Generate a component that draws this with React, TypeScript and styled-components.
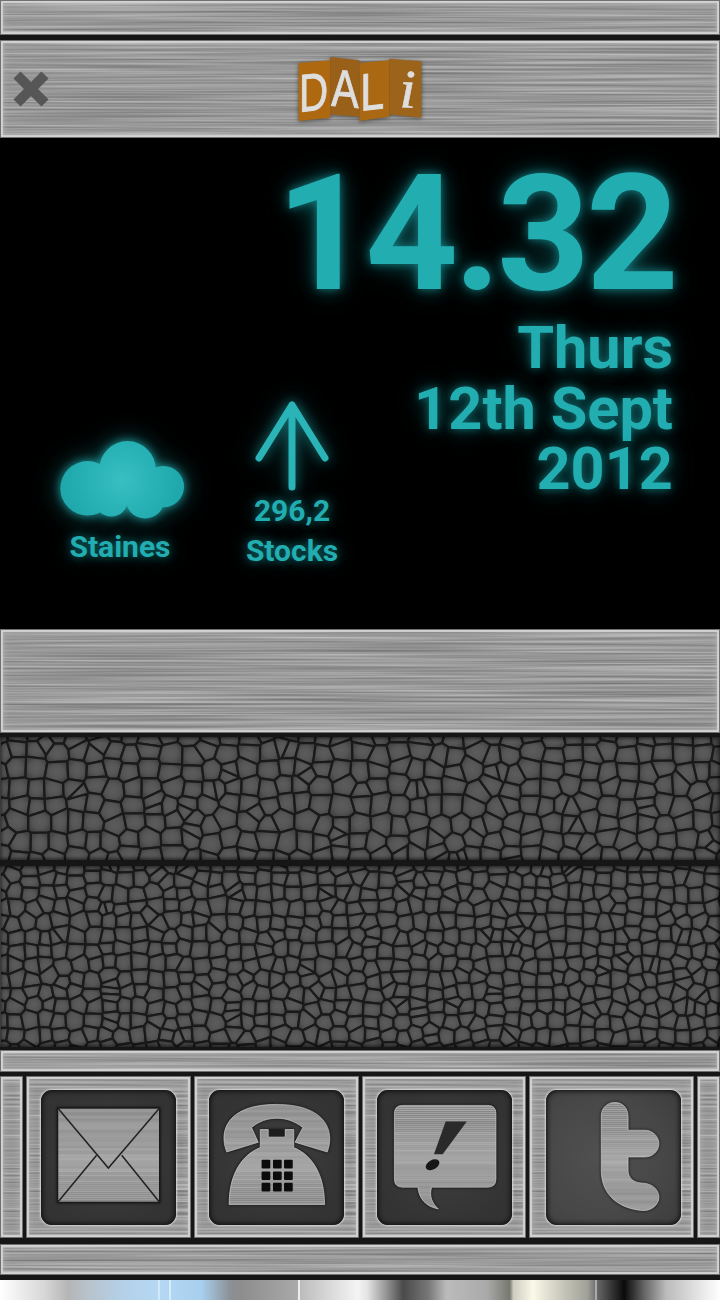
import React from "react";
import styled, { createGlobalStyle } from "styled-components";

const Global = createGlobalStyle`
  html, body { margin: 0; padding: 0; background: #000; }
  #root { width: 720px; height: 1300px; overflow: hidden; }
`;

const brushedSvg = `<svg xmlns='http://www.w3.org/2000/svg' width='720' height='240'><filter id='n' x='0' y='0' width='100%' height='100%' color-interpolation-filters='sRGB'><feTurbulence type='fractalNoise' baseFrequency='0.004 0.45' numOctaves='2' seed='7'/><feColorMatrix values='.4 0 0 0 .4 .4 0 0 0 .4 .4 0 0 0 .4 0 0 0 0 1'/><feGaussianBlur stdDeviation='5 .4'/></filter><rect width='720' height='240' filter='url(#n)'/></svg>`;
const brushed = `url("data:image/svg+xml,${encodeURIComponent(brushedSvg)}")`;

const bevel = `
  inset 0 0 0 1px #707070,
  inset 0 0 1px 3px #d2d2d2,
  inset 0 0 7px 4px rgba(255,255,255,.16)
`;

const Page = styled.div`
  width: 720px;
  height: 1300px;
  background: #161616;
  display: flex;
  flex-direction: column;
  font-family: Roboto, "Liberation Sans", sans-serif;
`;

const MetalBar = styled.div<{ $h: number; $gap?: number; $shift?: number }>`
  height: ${(p) => p.$h}px;
  flex: none;
  margin-top: ${(p) => p.$gap ?? 0}px;
  background: #999 ${brushed} 0 ${(p) => p.$shift ?? 0}px;
  box-shadow: ${bevel};
`;

const Header = styled(MetalBar)`
  display: grid;
  grid-template-columns: 1fr auto 1fr;
  align-items: center;
  padding: 0 13px;
`;

const Close = styled.svg`
  width: 36px;
  height: 36px;
  display: block;
`;

const Logo = styled.svg`
  width: 134px;
  height: 73px;
  display: block;
  filter: drop-shadow(0 1px 2px rgba(40, 40, 40, 0.7));
`;

const glow = `0 0 9px rgba(32,190,195,.5), 0 0 20px rgba(32,190,195,.35), 0 0 32px rgba(32,190,195,.2)`;

const Screen = styled.section`
  height: 491px;
  flex: none;
  background: #000;
  color: #22adb1;
  font-weight: 700;
  box-sizing: border-box;
  padding: 0 42px 0 0;
  text-shadow: ${glow};
`;

const Time = styled.div`
  font-size: 162px;
  line-height: 162px;
  letter-spacing: -4px;
  text-align: right;
  margin: 15px 3px 0 0;
`;

const Lower = styled.div`
  display: flex;
  justify-content: space-between;
  margin-top: 3px;
`;

const Widgets = styled.div`
  display: flex;
  align-items: flex-start;
  padding-left: 60px;
`;

const Weather = styled.div`
  width: 124px;
  margin-top: 123px;
  display: flex;
  flex-direction: column;
  align-items: center;
`;

const Stock = styled.div`
  width: 110px;
  margin: 83px 0 0 53px;
  display: flex;
  flex-direction: column;
  align-items: center;
`;

const Small = styled.div`
  font-size: 30px;
  line-height: 40px;
  white-space: nowrap;
`;

const Place = styled(Small)`
  margin: 8px 4px 0 0;
`;

const Cloud = styled.svg`
  width: 124px;
  height: 78px;
  display: block;
  overflow: visible;
  filter: drop-shadow(0 0 5px rgba(40, 205, 210, 0.7)) drop-shadow(0 0 12px rgba(32, 190, 195, 0.4));
`;

const Arrow = styled.svg`
  width: 76px;
  height: 90px;
  display: block;
  overflow: visible;
  filter: drop-shadow(0 0 6px rgba(32, 190, 195, 0.55)) drop-shadow(0 0 12px rgba(32, 190, 195, 0.3));
`;

const DateBlock = styled.div`
  font-size: 59.5px;
  line-height: 60.5px;
  text-align: right;
  white-space: nowrap;
  margin-right: 5px;
`;

const LeatherWrap = styled.div<{ $h: number; $gap: number }>`
  height: ${(p) => p.$h}px;
  margin-top: ${(p) => p.$gap}px;
  flex: none;
  position: relative;
  overflow: hidden;
  background: #262626;
  &::after {
    content: "";
    position: absolute;
    inset: 0;
    box-shadow: inset 0 0 4px 1px rgba(0, 0, 0, 0.75), inset 1px 0 0 #666;
  }
`;

const LeatherSvg = styled.svg`
  display: block;
  filter: blur(0.7px);
`;

const TileRow = styled.div`
  height: 162px;
  flex: none;
  margin-top: 4px;
  display: grid;
  grid-template-columns: 23px 165px 165px 164px 165px 1fr;
  column-gap: 3px;
`;

const Tile = styled.div<{ $shift: number }>`
  background: #999 ${brushed} 0 ${(p) => p.$shift}px;
  box-shadow: ${bevel};
  display: flex;
  align-items: center;
  justify-content: center;
`;

const IconBox = styled.div<{ $light?: boolean }>`
  width: 135px;
  height: 135px;
  border-radius: 11px;
  margin-left: ${(p) => (p.$light ? 4 : 0)}px;
  background: ${(p) =>
    p.$light
      ? "radial-gradient(circle at 40% 50%, #505050, #474747 60%, #3c3c3c)"
      : "radial-gradient(circle at 50% 50%, #3f3f3f, #333 75%)"};
  box-shadow: 0 0 2px 1px rgba(235, 235, 235, 0.75), inset 0 0 5px 1px #0c0c0c;
`;

const IconSvg = styled.svg`
  width: 135px;
  height: 135px;
  display: block;
  filter: drop-shadow(0 0 1.5px rgba(0, 0, 0, 0.95));
`;

const Strip = styled.div`
  height: 20px;
  flex: none;
  margin-top: 5px;
  background:
    linear-gradient(to right,
      transparent 22%, #cfe8fa 22%, #cfe8fa 22.2%, transparent 22.2%,
      transparent 23.5%, #d4ecfb 23.5%, #d4ecfb 23.7%, transparent 23.7%,
      transparent 41.4%, #eee 41.4%, #eee 41.6%, transparent 41.6%,
      transparent 82.7%, #aaa 82.7%, #aaa 82.85%, transparent 82.85%),
    linear-gradient(to right,
      #fff 0%, #d8d8d8 6%, #b5b5b5 9.5%, #b8c2ca 12%, #b4d0e8 17%, #b5d8f3 22%,
      #a8cfee 28%, #8b9094 32%, #8d8d8d 33.5%, #a9a9a9 41.3%, #bdbdbd 41.8%,
      #f4f4f4 49.7%, #e4e4e4 51%, #8a8a8a 54%, #4a4a4a 56%, #777 59.5%, #bbb 62%,
      #aaa 67.6%, #77786f 70.8%, #ccccc0 71.3%, #fbf9e8 74%, #c8c8bc 78%, #a0a098 81.6%,
      #666 83%, #0a0a0a 86.7%, #666 89.5%, #bbb 92.5%, #fff 100%);
`;

// Seeded cell texture
function rng(seed: number) {
  let s = seed;
  return () => {
    s = (s * 1664525 + 1013904223) >>> 0;
    return s / 4294967296;
  };
}

type P = [number, number];

function clip(poly: P[], a: P, b: P): P[] {
  const mx = (a[0] + b[0]) / 2;
  const my = (a[1] + b[1]) / 2;
  const nx = b[0] - a[0];
  const ny = b[1] - a[1];
  const side = (p: P) => (p[0] - mx) * nx + (p[1] - my) * ny;
  const out: P[] = [];
  for (let i = 0; i < poly.length; i++) {
    const c = poly[i];
    const d = poly[(i + 1) % poly.length];
    const sc = side(c);
    const sd = side(d);
    if (sc <= 0) out.push(c);
    if (sc < 0 !== sd < 0) {
      const t = sc / (sc - sd);
      out.push([c[0] + (d[0] - c[0]) * t, c[1] + (d[1] - c[1]) * t]);
    }
  }
  return out;
}

function cells(w: number, h: number, step: number, seed: number): string[] {
  const r = rng(seed);
  const pts: P[] = [];
  for (let y = -step; y < h + step; y += step * 0.92) {
    for (let x = -step; x < w + step; x += step) {
      pts.push([x + (r() - 0.5) * step * 0.55, y + (r() - 0.5) * step * 0.55]);
      if (r() < 0.07) pts.push([x + (r() - 0.5) * step, y + (r() - 0.5) * step]);
    }
  }
  const res: string[] = [];
  for (const p of pts) {
    let poly: P[] = [
      [p[0] - 40, p[1] - 40],
      [p[0] + 40, p[1] - 40],
      [p[0] + 40, p[1] + 40],
      [p[0] - 40, p[1] + 40],
    ];
    for (const q of pts) {
      if (q === p) continue;
      if (Math.abs(q[0] - p[0]) > 45 || Math.abs(q[1] - p[1]) > 45) continue;
      poly = clip(poly, p, q);
      if (poly.length === 0) break;
    }
    if (poly.length) res.push(poly.map((v) => `${v[0].toFixed(1)},${v[1].toFixed(1)}`).join(" "));
  }
  return res;
}

function Leather({ h, gap, step, seed, id }: { h: number; gap: number; step: number; seed: number; id: string }) {
  const polys = React.useMemo(() => cells(720, h, step, seed), [h, step, seed]);
  return (
    <LeatherWrap $h={h} $gap={gap}>
      <LeatherSvg width={720} height={h} viewBox={`0 0 720 ${h}`}>
        <defs>
          <radialGradient id={id}>
            <stop offset="0%" stopColor="#5c5c5c" />
            <stop offset="60%" stopColor="#555" />
            <stop offset="100%" stopColor="#444" />
          </radialGradient>
        </defs>
        {polys.map((pt, i) => (
          <polygon key={i} points={pt} fill={`url(#${id})`} stroke="#1a1a1a" strokeWidth={2.2} strokeLinejoin="round" />
        ))}
      </LeatherSvg>
    </LeatherWrap>
  );
}

const edge = "#d0d0d0";

function MetalPattern({ id, seed }: { id: string; seed: number }) {
  const r = rng(seed);
  const rows = Array.from({ length: 60 }, (_, i) => {
    const v = Math.round(158 + r() * 20);
    return <rect key={i} x="0" y={i * 6} width="1200" height="6" fill={`rgb(${v},${v},${v})`} />;
  });
  return (
    <pattern id={id} patternUnits="userSpaceOnUse" width="1200" height="360">
      {rows}
    </pattern>
  );
}

function MailIcon() {
  return (
    <IconSvg viewBox="124 150 403 403">
      <defs>
        <MetalPattern id="m1" seed={11} />
      </defs>
      <rect x="174" y="204" width="304" height="281" fill="url(#m1)" stroke="#111" strokeWidth="3" />
      <g fill="none" stroke="#222" strokeWidth="4.5">
        <path d="M174 204 L325 383 L478 204" />
        <path d="M174 485 L290 345" />
        <path d="M478 485 L365 345" />
      </g>
    </IconSvg>
  );
}

function PhoneIcon() {
  return (
    <IconSvg viewBox="625 150 403 403">
      <defs>
        <MetalPattern id="m2" seed={23} />
      </defs>
      <path
        d="M678 335 C652 270 682 193 825 193 C972 193 1002 270 978 335 L882 306 L905 262 C860 225 795 225 752 262 L772 306 Z"
        fill="url(#m2)"
        stroke={edge}
        strokeWidth="2"
      />
      <path
        d="M685 492 C685 405 720 345 778 322 L778 268 L802 268 L802 290 L852 290 L852 268 L878 268 L878 322 C935 345 970 405 970 492 Z"
        fill="url(#m2)"
        stroke={edge}
        strokeWidth="2"
      />
      <path d="M804 268 L850 268 L850 288 L804 288 Z" fill="#1d1d1d" />
      <g fill="#0c0c0c">
        {[782, 816, 849].flatMap((x) =>
          [358, 393, 427].map((y) => <rect key={`${x}-${y}`} x={x} y={y} width="26" height="26" rx="3" />)
        )}
      </g>
    </IconSvg>
  );
}

function ChatIcon() {
  return (
    <IconSvg viewBox="50 152 403 403">
      <defs>
        <MetalPattern id="m3" seed={37} />
      </defs>
      <path
        d="M126 198 L381 198 Q405 198 405 222 L405 418 Q405 442 381 442 L213 442 C205 470 215 490 233 507 C195 500 175 475 172 442 L126 442 Q102 442 102 418 L102 222 Q102 198 126 198 Z"
        fill="url(#m3)"
        stroke={edge}
        strokeWidth="2"
      />
      <path d="M255 246 L318 246 L246 344 L220 344 Z" fill="#2a2a2a" />
      <ellipse cx="216" cy="375" rx="22" ry="14" transform="rotate(-30 216 375)" fill="#161616" />
    </IconSvg>
  );
}

function BirdIcon() {
  return (
    <IconSvg viewBox="560 155 403 403">
      <defs>
        <MetalPattern id="m4" seed={51} />
      </defs>
      <path
        d="M725 232 C725 207 745 192 765 192 C790 192 805 210 805 235 L805 275 L855 275 C880 275 897 295 897 315 C897 338 878 355 855 355 L805 355 L805 395 C805 420 825 433 850 433 C880 435 897 455 897 475 C897 498 875 515 850 515 C780 510 725 470 725 395 Z"
        fill="url(#m4)"
        stroke={edge}
        strokeWidth="2"
      />
    </IconSvg>
  );
}

const serif = '"Liberation Serif", serif';
const sans = '"Liberation Sans", sans-serif';

export default function App() {
  return (
    <Page>
      <Global />
      <MetalBar $h={35} />
      <Header $h={98} $gap={5} $shift={-40}>
        <Close viewBox="0 0 36 36">
          <path d="M4 4 L32 32 M32 4 L4 32" stroke="#565656" strokeWidth="10" />
        </Close>
        <Logo viewBox="40 20 400 220">
          <polygon points="55,50 150,42 150,215 55,225" fill="#ad6810" />
          <polygon points="150,32 238,42 238,212 150,205" fill="#99601a" />
          <polygon points="238,50 328,42 328,212 238,225" fill="#aa6812" />
          <polygon points="328,37 425,45 425,215 328,205" fill="#9c631a" />
          <g fill="#dedede" stroke="#dedede">
            <text transform="matrix(.76 -.08 0 1 56 198)" fontFamily={sans} fontSize="160" strokeWidth="3">D</text>
            <text transform="matrix(.78 .07 0 1 153 178)" fontFamily={sans} fontSize="158" strokeWidth="3">A</text>
            <text transform="matrix(.82 -.1 0 1 241 195)" fontFamily={sans} fontSize="158" strokeWidth="3">L</text>
            <text transform="matrix(1.1 .03 0 1 358 184)" fontFamily={serif} fontStyle="italic" fontSize="165" strokeWidth="1.5">i</text>
          </g>
        </Logo>
      </Header>
      <Screen>
        <Time>14.32</Time>
        <Lower>
          <Widgets>
            <Weather>
              <Cloud viewBox="89 183 373 234">
                <defs>
                  <radialGradient id="cloudFill" gradientUnits="userSpaceOnUse" cx="275" cy="300" r="170">
                    <stop offset="0%" stopColor="#37bfc1" />
                    <stop offset="100%" stopColor="#1fa9ad" />
                  </radialGradient>
                </defs>
                <g fill="url(#cloudFill)">
                  <circle cx="172" cy="325" r="82" />
                  <circle cx="292" cy="268" r="85" />
                  <circle cx="400" cy="320" r="62" />
                  <circle cx="243" cy="360" r="50" />
                  <circle cx="345" cy="358" r="58" />
                  <rect x="180" y="280" width="200" height="80" />
                </g>
              </Cloud>
              <Place>Staines</Place>
            </Weather>
            <Stock>
              <Arrow viewBox="0 0 76 90">
                <path d="M38 86 V4 M5 57 L38 4 L71 57" fill="none" stroke="#2ab4b7" strokeWidth="7" strokeLinecap="round" strokeLinejoin="round" />
              </Arrow>
              <Small>296,2</Small>
              <Small>Stocks</Small>
            </Stock>
          </Widgets>
          <DateBlock>
            Thurs
            <br />
            12th Sept
            <br />
            2012
          </DateBlock>
        </Lower>
      </Screen>
      <MetalBar $h={104} $shift={-70} />
      <Leather h={123} gap={4} step={19} seed={5} id="cellA" />
      <Leather h={181} gap={6} step={15.5} seed={91} id="cellB" />
      <MetalBar $h={22} $gap={3} $shift={-120} />
      <TileRow>
        <Tile $shift={-10} />
        <Tile $shift={-30}>
          <IconBox>
            <MailIcon />
          </IconBox>
        </Tile>
        <Tile $shift={-30}>
          <IconBox>
            <PhoneIcon />
          </IconBox>
        </Tile>
        <Tile $shift={-30}>
          <IconBox>
            <ChatIcon />
          </IconBox>
        </Tile>
        <Tile $shift={-30}>
          <IconBox $light>
            <BirdIcon />
          </IconBox>
        </Tile>
        <Tile $shift={-10} />
      </TileRow>
      <MetalBar $h={31} $gap={6} $shift={-180} />
      <Strip />
    </Page>
  );
}
